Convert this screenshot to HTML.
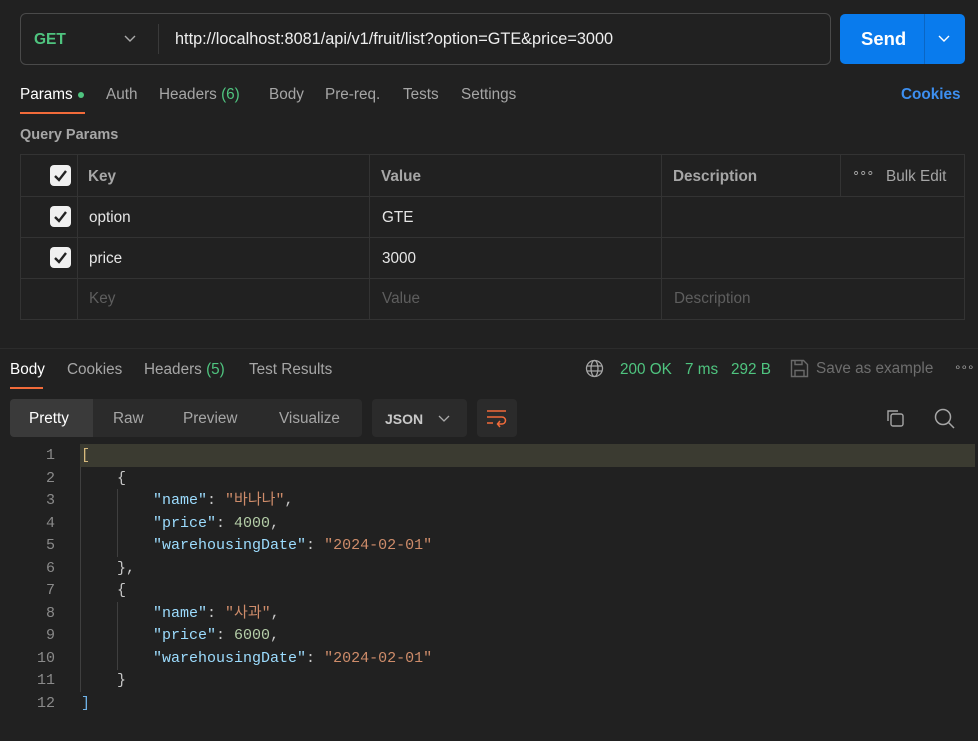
<!DOCTYPE html>
<html><head><meta charset="utf-8"><style>
*{margin:0;padding:0;box-sizing:border-box}
body{width:978px;height:741px;background:#212121;font-family:"Liberation Sans","Noto Sans CJK KR",sans-serif;color:#e6e6e6;position:relative;overflow:hidden;font-size:15.3px}
.a{position:absolute;white-space:nowrap}
.g{color:#a6a6a6}
.gr{color:#4fc47f}
.t{position:absolute;left:20px;top:154px;width:945px;height:166px;border:1px solid #333}
.h{position:absolute;background:#333}
.cb{position:absolute;width:21px;height:21px;background:#f0f0f0;border-radius:4px}
.cb svg{position:absolute;left:3px;top:4px}
.code{position:absolute;font-family:"Liberation Mono","Noto Sans CJK KR",monospace;font-size:15px;line-height:22.5px}
.k{color:#9cdcfe}.s{color:#ce8c6a}.n{color:#b5cea8}.p{color:#c8c8c8}
</style></head><body>
<div class="a" style="left:20px;top:13px;width:811px;height:52px;border:1px solid #4a4a4a;border-radius:6px"></div>
<div class="a" style="left:34px;top:31px;font-weight:bold;color:#4fc47f;font-size:15.5px">GET</div>
<svg class="a" style="left:124px;top:35px" width="12" height="8"><path d="M1 1l5 5 5-5" stroke="#aaa" stroke-width="1.4" fill="none"/></svg>
<div class="h" style="left:158px;top:24px;width:1px;height:30px;background:#3a3a3a"></div>
<div class="a" style="left:175px;top:30px;font-size:16.3px;color:#eee">http://localhost:8081/api/v1/fruit/list?option=GTE&amp;price=3000</div>
<div class="a" style="left:840px;top:14px;width:125px;height:50px;background:#097bed;border-radius:5px"></div>
<div class="h" style="left:924px;top:14px;width:1px;height:50px;background:#0a66c4"></div>
<div class="a" style="left:861px;top:28px;font-weight:bold;font-size:18.5px;color:#fff">Send</div>
<svg class="a" style="left:938px;top:35px" width="12" height="8"><path d="M1 1l5 5 5-5" stroke="#fff" stroke-width="1.4" fill="none"/></svg>
<div class="a" style="left:20px;top:86px;color:#fff">Params</div>
<div class="a" style="left:78px;top:92px;width:6px;height:6px;border-radius:50%;background:#4fc47f"></div>
<div class="h" style="left:20px;top:112px;width:65px;height:2px;background:#f26b3a"></div>
<div class="a g" style="left:106px;top:86px">Auth</div>
<div class="a g" style="left:159px;top:86px">Headers <span class="gr">(6)</span></div>
<div class="a g" style="left:269px;top:86px">Body</div>
<div class="a g" style="left:325px;top:86px">Pre-req.</div>
<div class="a g" style="left:403px;top:86px">Tests</div>
<div class="a g" style="left:461px;top:86px">Settings</div>
<div class="a" style="left:901px;top:86px;color:#3d8ff0;font-weight:bold">Cookies</div>
<div class="a g" style="left:20px;top:127px;font-weight:bold;font-size:14.5px">Query Params</div>
<div class="t"></div>
<div class="h" style="left:20px;top:196px;width:945px;height:1px"></div>
<div class="h" style="left:20px;top:237px;width:945px;height:1px"></div>
<div class="h" style="left:20px;top:278px;width:945px;height:1px"></div>
<div class="h" style="left:77px;top:154px;width:1px;height:166px"></div>
<div class="h" style="left:369px;top:154px;width:1px;height:166px"></div>
<div class="h" style="left:661px;top:154px;width:1px;height:166px"></div>
<div class="h" style="left:840px;top:154px;width:1px;height:42px"></div>
<div class="cb" style="left:50px;top:165px"><svg width="15" height="13"><path d="M2 7l4 4 7-9" stroke="#222" stroke-width="2.4" fill="none"/></svg></div>
<div class="cb" style="left:50px;top:206px"><svg width="15" height="13"><path d="M2 7l4 4 7-9" stroke="#222" stroke-width="2.4" fill="none"/></svg></div>
<div class="cb" style="left:50px;top:247px"><svg width="15" height="13"><path d="M2 7l4 4 7-9" stroke="#222" stroke-width="2.4" fill="none"/></svg></div>
<div class="a g" style="left:88px;top:168px;font-weight:bold">Key</div>
<div class="a g" style="left:381px;top:168px;font-weight:bold">Value</div>
<div class="a g" style="left:673px;top:168px;font-weight:bold">Description</div>
<div class="a g" style="left:852px;top:165px;font-size:13px;letter-spacing:-1px">∘∘∘</div>
<div class="a g" style="left:886px;top:168px">Bulk Edit</div>
<div class="a" style="left:89px;top:209px">option</div>
<div class="a" style="left:382px;top:209px">GTE</div>
<div class="a" style="left:89px;top:250px">price</div>
<div class="a" style="left:382px;top:250px">3000</div>
<div class="a" style="left:89px;top:290px;color:#5e5e5e">Key</div>
<div class="a" style="left:382px;top:290px;color:#5e5e5e">Value</div>
<div class="a" style="left:674px;top:290px;color:#5e5e5e">Description</div>
<div class="h" style="left:0;top:348px;width:978px;height:1px;background:#2c2c2c"></div>
<div class="a" style="left:10px;top:361px;color:#fff">Body</div>
<div class="h" style="left:10px;top:387px;width:33px;height:2px;background:#f26b3a"></div>
<div class="a g" style="left:67px;top:361px">Cookies</div>
<div class="a g" style="left:144px;top:361px">Headers <span class="gr">(5)</span></div>
<div class="a g" style="left:249px;top:361px">Test Results</div>
<svg class="a" style="left:585px;top:359px" width="19" height="19" fill="none" stroke="#a6a6a6" stroke-width="1.3"><circle cx="9.5" cy="9.5" r="8"/><ellipse cx="9.5" cy="9.5" rx="3.5" ry="8"/><path d="M1.5 7h16M1.5 12h16"/></svg>
<div class="a gr" style="left:620px;top:361px">200 OK</div>
<div class="a gr" style="left:685px;top:361px">7 ms</div>
<div class="a gr" style="left:731px;top:361px">292 B</div>
<svg class="a" style="left:790px;top:359px" width="19" height="19" fill="none" stroke="#6a6a6a" stroke-width="1.4"><path d="M1.5 1.5h12l4 4v12h-16z"/><path d="M5 1.5v4h7v-4M5 17.5v-6h9v6"/></svg>
<div class="a" style="left:816px;top:360px;color:#6e6e6e">Save as example</div>
<div class="a g" style="left:954px;top:360px;font-size:12px;letter-spacing:-1px">∘∘∘</div>
<div class="a" style="left:10px;top:399px;width:352px;height:38px;background:#2b2b2b;border-radius:4px"></div>
<div class="a" style="left:10px;top:399px;width:83px;height:38px;background:#3a3a3a;border-radius:4px 0 0 4px"></div>
<div class="a" style="left:29px;top:410px;color:#fff">Pretty</div>
<div class="a g" style="left:113px;top:410px">Raw</div>
<div class="a g" style="left:183px;top:410px">Preview</div>
<div class="a g" style="left:279px;top:410px">Visualize</div>
<div class="a" style="left:372px;top:399px;width:95px;height:38px;background:#2b2b2b;border-radius:4px"></div>
<div class="a" style="left:385px;top:411px;font-weight:bold;font-size:14px;color:#c8c8c8">JSON</div>
<svg class="a" style="left:438px;top:415px" width="12" height="8"><path d="M1 1l5 5 5-5" stroke="#aaa" stroke-width="1.3" fill="none"/></svg>
<div class="a" style="left:477px;top:399px;width:40px;height:38px;background:#2b2b2b;border-radius:4px"></div>
<svg class="a" style="left:486px;top:408px" width="22" height="20" fill="none" stroke="#f26b3a" stroke-width="1.5"><path d="M1 3h19M1 9h15a3.5 3.5 0 010 7h-4M1 15h6M14 13l-2.5 3 2.5 3"/></svg>
<svg class="a" style="left:885px;top:408px" width="20" height="20" fill="none" stroke="#a6a6a6" stroke-width="1.4"><rect x="6" y="6" width="12" height="12" rx="2"/><path d="M3 13V3h10"/></svg>
<svg class="a" style="left:934px;top:408px" width="22" height="22" fill="none" stroke="#a6a6a6" stroke-width="1.5"><circle cx="9" cy="9" r="7.5"/><path d="M14.5 14.5l5.5 5.5"/></svg>
<div class="a" style="left:80px;top:444px;width:895px;height:23px;background:#3b3b31"></div>
<div class="h" style="left:80px;top:467px;width:1px;height:225px;background:#3f3f3f"></div>
<div class="h" style="left:117px;top:489px;width:1px;height:68px;background:#3f3f3f"></div>
<div class="h" style="left:117px;top:602px;width:1px;height:68px;background:#3f3f3f"></div>
<div class="code" style="left:20px;top:445px;width:35px;text-align:right;color:#8a8a8a">1<br>2<br>3<br>4<br>5<br>6<br>7<br>8<br>9<br>10<br>11<br>12</div>
<div class="code p" style="left:81px;top:445px;white-space:pre"><span style="color:#d7ba7d">[</span>
    {
        <span class="k">"name"</span>: <span class="s">"바나나"</span>,
        <span class="k">"price"</span>: <span class="n">4000</span>,
        <span class="k">"warehousingDate"</span>: <span class="s">"2024-02-01"</span>
    },
    {
        <span class="k">"name"</span>: <span class="s">"사과"</span>,
        <span class="k">"price"</span>: <span class="n">6000</span>,
        <span class="k">"warehousingDate"</span>: <span class="s">"2024-02-01"</span>
    }
<span style="color:#6fb3e8">]</span></div>
</body></html>
